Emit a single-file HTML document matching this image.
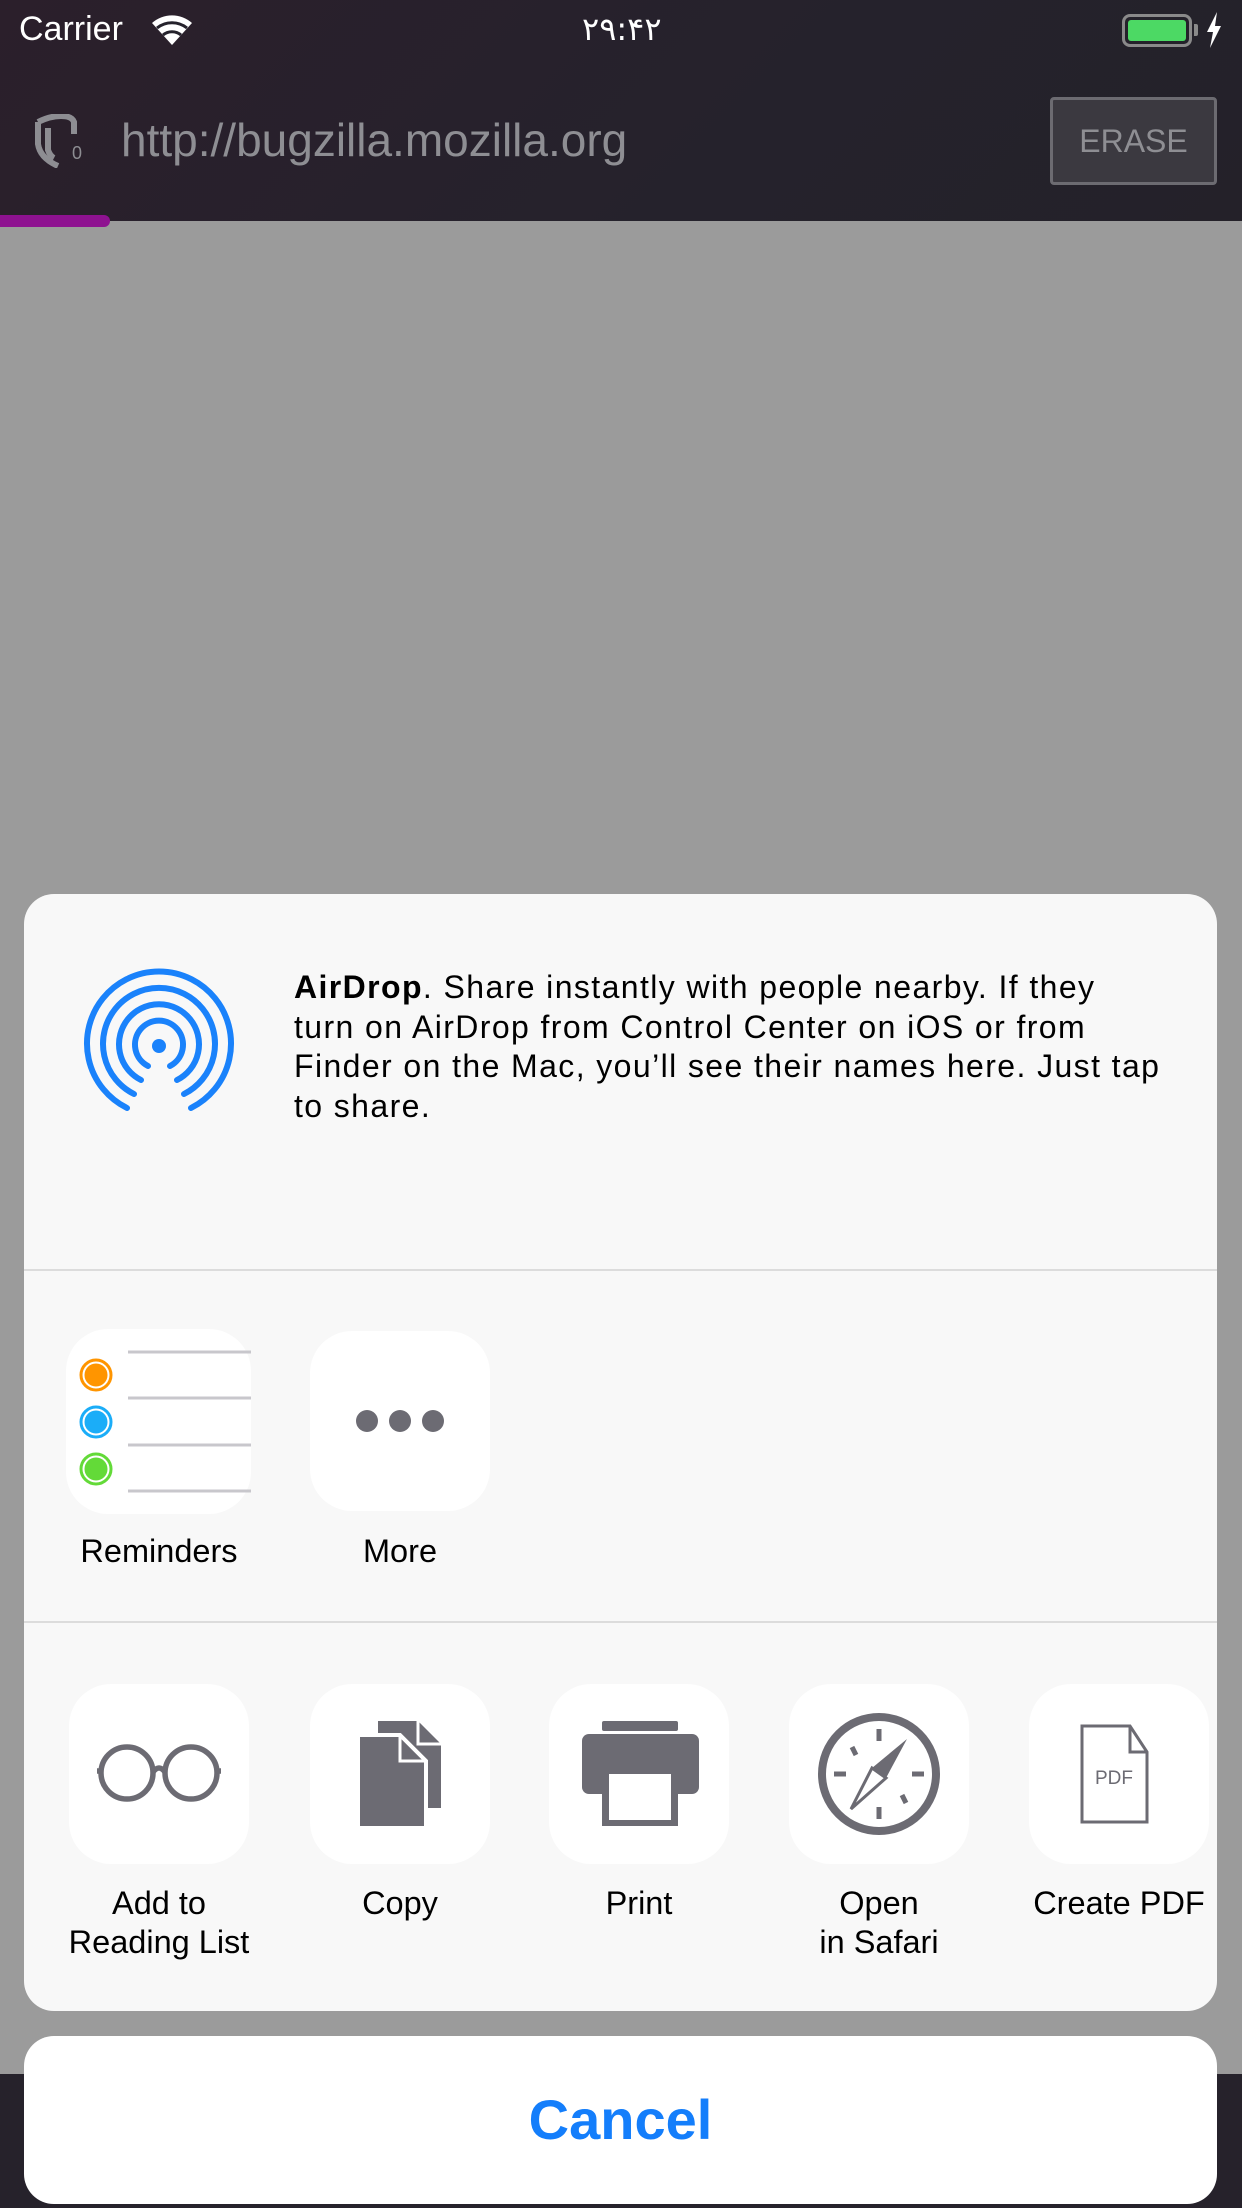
<!DOCTYPE html>
<html><head><meta charset="utf-8"><style>
*{margin:0;padding:0;box-sizing:border-box}
body{width:1242px;height:2208px;overflow:hidden;background:#9b9b9b;font-family:"Liberation Sans",sans-serif;position:relative}
.top{position:absolute;left:0;top:0;width:1242px;height:221px;background:linear-gradient(135deg,#2b1f2b,#25222c 60%,#242129)}
.abs{position:absolute}
.sheet{position:absolute;left:24px;top:894px;width:1193px;height:1117px;background:#f8f8f8;border-radius:30px;overflow:hidden}
.ic{position:absolute;width:180px;height:180px;background:#fff;border-radius:42px}
.lbl{position:absolute;width:240px;text-align:center;font-size:32.5px;line-height:39px;color:#000}
</style></head><body>
<div class="top"></div>
<div class="abs" style="left:0;top:215px;width:110px;height:12px;background:#8e1290;border-radius:0 6px 6px 0"></div>
<div class="abs" style="left:0;top:2074px;width:1242px;height:134px;background:#26222b"></div>
<div class="abs" style="left:19px;top:10px;font-size:34px;color:#fff">Carrier</div>
<svg class="abs" style="left:150px;top:12px" width="44" height="34" viewBox="0 0 44 34"><path d="M22 33 L2 11 A30 30 0 0 1 42 11 Z" fill="#fff"/><path d="M7 16 A24 24 0 0 1 37 16" stroke="#25222c" stroke-width="3" fill="none"/><path d="M13 23 A14 14 0 0 1 31 23" stroke="#25222c" stroke-width="3" fill="none"/></svg>
<div class="abs" style="left:582px;top:10px;font-size:32px;color:#fff;font-family:'DejaVu Sans',sans-serif">۲۹:۴۲</div>
<div class="abs" style="left:1122px;top:14px;width:70px;height:33px;border:3px solid #8a8a8a;border-radius:8px;padding:3px"><div style="width:100%;height:100%;background:#4cd964;border-radius:3px"></div></div>
<div class="abs" style="left:1194px;top:24px;width:4px;height:12px;background:#8a8a8a;border-radius:0 2px 2px 0"></div>
<svg class="abs" style="left:1206px;top:12px" width="16" height="36" viewBox="0 0 16 36"><path d="M11 0 L1 20 H7 L4 36 L15 14 H9 Z" fill="#fff"/></svg>
<svg class="abs" style="left:34px;top:114px" width="54" height="54" viewBox="0 0 54 54"><path d="M4 8 Q16 2 27 2 Q38 2 40 8 V20 M4 8 V30 Q6 44 24 52" stroke="#8d8d92" stroke-width="6" fill="none"/><path d="M14 14 V36 Q16 42 20 44" stroke="#8d8d92" stroke-width="6" fill="none"/><text x="38" y="45" font-size="18" fill="#8d8d92" font-family="Liberation Sans">0</text></svg>
<div class="abs" style="left:121px;top:113px;font-size:46px;color:#8e8e93">http://bugzilla.mozilla.org</div>
<div class="abs" style="left:1050px;top:97px;width:167px;height:88px;border:3px solid #6c6b71;background:#3b3940;border-radius:4px;color:#8e8e93;font-size:32px;text-align:center;line-height:82px">ERASE</div>

<div class="sheet">
<svg class="abs" style="left:57px;top:74px" width="156" height="156" viewBox="-78 -78 156 156"><g stroke="#1a82fb" stroke-width="6" fill="none" stroke-linecap="round"><path d="M-32 62 A72 72 0 1 1 32 62"/><path d="M-25 48 A56 56 0 1 1 25 48"/><path d="M-18 34 A40 40 0 1 1 18 34"/><path d="M-11 20 A24 24 0 1 1 11 20"/></g><circle r="7" fill="#1a82fb"/></svg>
<div class="abs" style="left:270px;top:74px;width:920px;font-size:32px;line-height:39.5px;color:#000;white-space:nowrap;letter-spacing:1.4px">
<b>AirDrop</b>. Share instantly with people nearby. If they<br>turn on AirDrop from Control Center on iOS or from<br>Finder on the Mac, you’ll see their names here. Just tap<br>to share.</div>
<div class="abs" style="left:0;top:375px;width:1193px;height:2px;background:#dcdcdc"></div>
<div class="abs" style="left:0;top:727px;width:1193px;height:2px;background:#dcdcdc"></div>

<div class="ic" style="left:42px;top:435px;width:185px;height:185px"><svg width="185" height="185" viewBox="0 0 185 185">
<g stroke="#c8c7cc" stroke-width="3"><line x1="62" y1="23" x2="185" y2="23"/><line x1="62" y1="69" x2="185" y2="69"/><line x1="62" y1="116" x2="185" y2="116"/><line x1="62" y1="162" x2="185" y2="162"/></g>
<circle cx="30" cy="46" r="13" fill="#ff9500" stroke="#fff" stroke-width="3"/><circle cx="30" cy="46" r="15" fill="none" stroke="#ff9500" stroke-width="3"/>
<circle cx="30" cy="93" r="13" fill="#1badf8" stroke="#fff" stroke-width="3"/><circle cx="30" cy="93" r="15" fill="none" stroke="#1badf8" stroke-width="3"/>
<circle cx="30" cy="140" r="13" fill="#63da38" stroke="#fff" stroke-width="3"/><circle cx="30" cy="140" r="15" fill="none" stroke="#63da38" stroke-width="3"/></svg></div>
<div class="lbl" style="left:15px;top:638px">Reminders</div>
<div class="ic" style="left:286px;top:437px"><svg width="180" height="180"><g fill="#6c6b73"><circle cx="57" cy="90" r="11"/><circle cx="90" cy="90" r="11"/><circle cx="123" cy="90" r="11"/></g></svg></div>
<div class="lbl" style="left:256px;top:638px">More</div>

<div class="ic" style="left:45px;top:790px"><svg width="180" height="180"><g stroke="#6c6b73" stroke-width="5.5" fill="none"><circle cx="58" cy="89" r="26"/><circle cx="122" cy="89" r="26"/><path d="M84 88 Q90 80 96 88"/><path d="M32 87 H28 M148 87 H152"/></g></svg></div>
<div class="lbl" style="left:15px;top:990px">Add to<br>Reading List</div>
<div class="ic" style="left:286px;top:790px"><svg width="180" height="180"><path d="M68 37 H108 L131 60 V124 H68 Z" fill="#6c6b73"/><path d="M108 37 V60 H131" fill="none" stroke="#fff" stroke-width="3"/><path d="M48 51 H90 L116 77 V144 H48 Z" fill="#6c6b73" stroke="#fff" stroke-width="4"/><path d="M90 53 V77 H114" fill="none" stroke="#fff" stroke-width="3"/></svg></div>
<div class="lbl" style="left:256px;top:990px">Copy</div>
<div class="ic" style="left:525px;top:790px"><svg width="180" height="180"><rect x="53" y="37" width="76" height="10" rx="2" fill="#6c6b73"/><rect x="33" y="50" width="117" height="60" rx="7" fill="#6c6b73"/><rect x="53" y="84" width="76" height="58" fill="#6c6b73"/><rect x="60" y="90" width="62" height="46" fill="#fff"/></svg></div>
<div class="lbl" style="left:495px;top:990px">Print</div>
<div class="ic" style="left:765px;top:790px"><svg width="180" height="180"><circle cx="90" cy="90" r="57" stroke="#6c6b73" stroke-width="8" fill="none"/><g stroke="#6c6b73" stroke-width="5"><line x1="90" y1="45" x2="90" y2="57"/><line x1="90" y1="123" x2="90" y2="135"/><line x1="45" y1="90" x2="57" y2="90"/><line x1="123" y1="90" x2="135" y2="90"/><line x1="63" y1="63" x2="67" y2="71"/><line x1="113" y1="111" x2="117" y2="119"/></g><path d="M118 55 L97 94 L83 84 Z" fill="#6c6b73"/><path d="M62 125 L83 84 L97 94 Z" fill="none" stroke="#6c6b73" stroke-width="3"/></svg></div>
<div class="lbl" style="left:735px;top:990px">Open<br>in Safari</div>
<div class="ic" style="left:1005px;top:790px"><svg width="180" height="180"><path d="M53 42 H101 L118 68 V138 H53 Z M101 42 V68 H118" stroke="#6c6b73" stroke-width="3" fill="none"/><text x="85" y="100" text-anchor="middle" font-size="19" fill="#6c6b73" font-family="Liberation Sans">PDF</text></svg></div>
<div class="lbl" style="left:975px;top:990px">Create PDF</div>
</div>

<div class="abs" style="left:24px;top:2036px;width:1193px;height:168px;background:#fff;border-radius:30px;text-align:center;line-height:168px;font-size:56px;font-weight:bold;color:#147efb">Cancel</div>
</body></html>
